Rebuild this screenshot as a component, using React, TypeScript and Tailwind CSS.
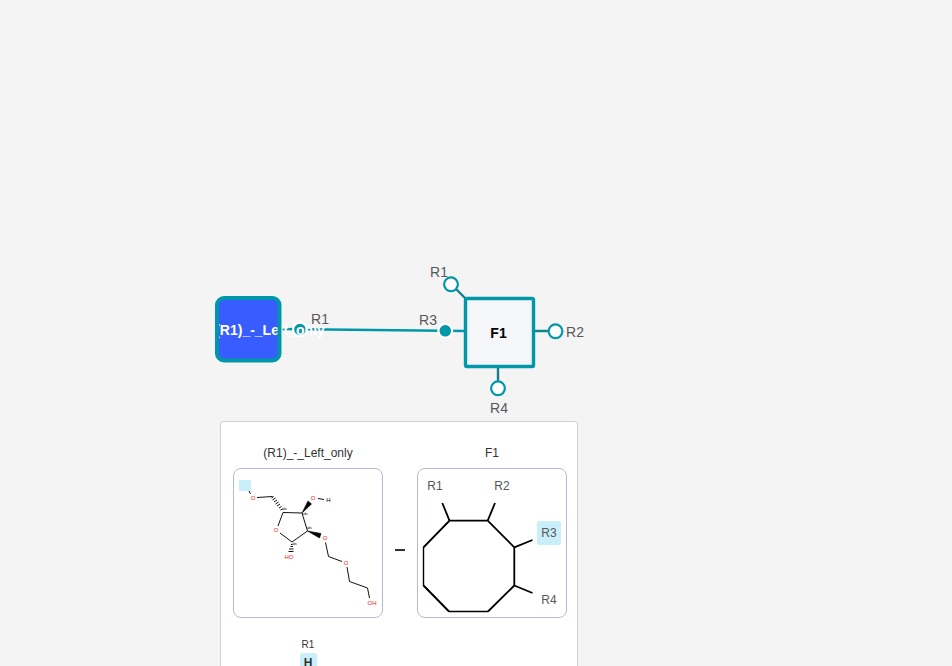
const TEAL = '#0097a8';
const STEM = '#14808c';

type Point = { x: number; y: number };

const openPoints: Point[] = [
  { x: 451, y: 284 },
  { x: 555.5, y: 331 },
  { x: 498, y: 388 },
];

const pointLabels = [
  { text: 'R1', x: 439, y: 277 },
  { text: 'R3', x: 428, y: 325 },
  { text: 'R2', x: 575, y: 337 },
  { text: 'R4', x: 499, y: 413 },
  { text: 'R1', x: 320, y: 324 },
];

function MonomerGraph() {
  return (
    <svg className="absolute inset-0 block h-full w-full font-['Liberation_Sans',sans-serif]" aria-label="Monomer canvas">
      <path d="M281 329 L465 331" stroke={TEAL} strokeWidth="2.4" />
      <path d="M451 284 L467 300 M534 331 H555 M498 366 V388" stroke={STEM} strokeWidth="2.4" fill="none" />

      <rect x="465.5" y="298.5" width="68" height="68" rx="1.5" fill="#f4f6f9" stroke={TEAL} strokeWidth="3.4" />
      <text x="498.5" y="338" textAnchor="middle" className="fill-black text-[14px] font-bold">F1</text>

      {openPoints.map((p) => (
        <circle key={`${p.x}-${p.y}`} cx={p.x} cy={p.y + 0.3} r="6.9" fill="#fff" stroke={TEAL} strokeWidth="2.2" />
      ))}
      <circle cx="445.3" cy="330.8" r="6.9" fill={TEAL} stroke="#fff" strokeWidth="2.2" />
      <circle cx="300" cy="329.5" r="6.9" fill={TEAL} stroke="#fff" strokeWidth="2.2" />

      <rect x="217" y="298" width="62" height="62" rx="7" fill="#385cff" />
      <text x="270" y="335" textAnchor="middle" className="fill-white text-[14px] font-bold">(R1)_-_Left_only</text>
      <rect x="217" y="298" width="62.5" height="62.5" rx="7" fill="none" stroke={TEAL} strokeWidth="4" />

      {pointLabels.map((l) => (
        <text key={`${l.x}-${l.y}`} x={l.x} y={l.y} textAnchor="middle" className="fill-[#585858] text-[14px]">
          {l.text}
        </text>
      ))}
    </svg>
  );
}

const stereoLabels: Point[] = [
  { x: 282, y: 510 },
  { x: 303, y: 515 },
  { x: 307, y: 529 },
  { x: 292, y: 545 },
];

const oxygens = [
  { text: 'O', x: 253, y: 500 },
  { text: 'O', x: 313, y: 500 },
  { text: 'O', x: 276, y: 532 },
  { text: 'O', x: 325, y: 540 },
  { text: 'O', x: 346, y: 565 },
  { text: 'HO', x: 289, y: 559 },
  { text: 'OH', x: 372, y: 605 },
];

function SugarStructure() {
  return (
    <svg viewBox="234 469 148 148" className="block h-full w-full font-['Liberation_Sans',sans-serif]" aria-label="Sugar structure">
      <rect x="239" y="480" width="12" height="11" rx="1" fill="#c9effb" />
      <g stroke="#111" strokeWidth="1" fill="none">
        <path d="M249 491 L250.5 494 M257 497.5 L272.5 496.5" />
        <path d="M278 526 L283 512.5 L302 513 L307.5 531 L292 542 L280 533" />
        <path d="M318 498.5 L324 499.5 M325.5 542.5 L328.5 556.5 L342 561.5 M347 567 L349.5 581.5 L367.5 588 L369.5 598" />
        <path d="M271.5 498 l2 -1.5 M272.5 500 l3 -2 M274 502 l3 -2 M275.5 504 l3 -2 M277 506 l3 -2 M279 508 l2.5 -1.5 M280.5 510 l2 -1" />
        <path d="M291 544.5 h1.5 M290.5 546.5 h2.5 M289 549 h4.5 M288.5 551.5 h5" />
      </g>
      <path d="M302 513 L308 501 L311.5 504 Z M307.5 531 L321 533.5 L319.5 538 Z" fill="#000" stroke="#000" strokeWidth="0.6" />
      {oxygens.map((o) => (
        <text key={`${o.x}-${o.y}`} x={o.x} y={o.y} textAnchor="middle" className="fill-[#f01818] text-[6px]">
          {o.text}
        </text>
      ))}
      <text x="328.5" y="502" textAnchor="middle" className="fill-black text-[6px]">H</text>
      {stereoLabels.map((s) => (
        <text key={`${s.x}-${s.y}`} x={s.x} y={s.y} className="fill-black text-[3px]">abs</text>
      ))}
    </svg>
  );
}

const ringLabels = [
  { text: 'R1', x: 435, y: 490 },
  { text: 'R2', x: 502, y: 490 },
  { text: 'R3', x: 549, y: 537 },
  { text: 'R4', x: 549, y: 604 },
];

function RingStructure() {
  return (
    <svg viewBox="418 469 148 148" className="block h-full w-full font-['Liberation_Sans',sans-serif]" aria-label="F1 structure">
      <path
        d="M449.5 520.7 L423.5 547.3 V585.5 L449 611.5 H488"
        fill="none"
        stroke="#000"
        strokeWidth="1.4"
      />
      <path d="M423.5 547.3 L449.5 520.7 H487.7 L514.3 547.3 V585.5 L488 611.5 M449 611.5 L423.5 585.5" fill="none" stroke="#000" strokeWidth="1.8" />
      <path
        d="M449.5 520.7 L442.3 503 M487.7 520.7 L495 503 M514.3 547.3 L532.5 540 M514.3 585.5 L532.5 593"
        stroke="#000"
        strokeWidth="1.8"
      />
      <rect x="537" y="521" width="24" height="24" rx="2" fill="#c9effb" />
      {ringLabels.map((l) => (
        <text key={l.text} x={l.x} y={l.y} textAnchor="middle" className="fill-[#585858] text-[12px]">
          {l.text}
        </text>
      ))}
    </svg>
  );
}

function ConnectionPreview() {
  return (
    <section className="absolute left-[220px] top-[421px] rounded-[3px] border border-[#cad3dd] bg-white pb-4 pl-3 pr-[10px] pt-[23px] text-[#333]">
      <div className="flex items-end">
        <figure>
          <figcaption className="text-center text-xs leading-4">(R1)_-_Left_only</figcaption>
          <div className="mt-[7px] size-[150px] rounded-lg border border-[#b4b9d6]">
            <SugarStructure />
          </div>
        </figure>
        <div className="flex h-[150px] w-[34px] items-center justify-center pt-[13px]">
          <span className="h-[2px] w-[10px] bg-[#333]" />
        </div>
        <figure>
          <figcaption className="text-center text-xs leading-4">F1</figcaption>
          <div className="mt-[7px] size-[150px] rounded-lg border border-[#b4b9d6]">
            <RingStructure />
          </div>
        </figure>
      </div>
      <div className="mt-5 flex w-[150px] flex-col items-center">
        <span className="text-[10px] leading-[14px]">R1</span>
        <span className="mt-px flex h-5 w-[17px] items-center justify-center rounded-[3px] bg-[#c9effb] text-xs font-bold">
          H
        </span>
      </div>
    </section>
  );
}

export default function App() {
  return (
    <main className="relative h-screen overflow-hidden bg-[#f4f4f4] font-['Liberation_Sans',Arial,sans-serif]">
      <MonomerGraph />
      <ConnectionPreview />
    </main>
  );
}
